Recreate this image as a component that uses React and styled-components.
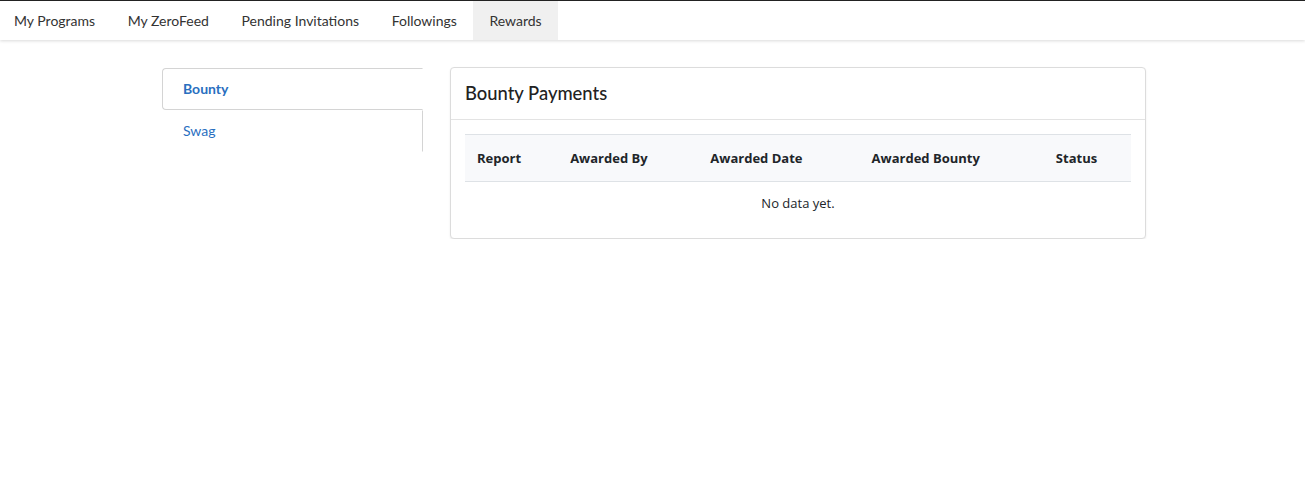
import React from "react";
import styled, { createGlobalStyle } from "styled-components";

const Global = createGlobalStyle`
  html, body { margin: 0; padding: 0; background: #fff; }
  body { font-family: Lato, "Open Sans", sans-serif; color: #212529; }
  * { box-sizing: border-box; }
`;

const TopNav = styled.nav`
  display: flex;
  height: 40px;
  border-top: 1px solid #222;
  background: #fff;
  box-shadow: 0 1px 3px rgba(0, 0, 0, 0.15);
`;

const NavItem = styled.div`
  display: flex;
  align-items: center;
  padding: 0 16.3px;
  font-size: 14px;
  color: #333;
  background: ${(p) => (p.$active ? "#f0f0f0" : "transparent")};
  &:first-child { padding-left: 14px; }
`;

const Main = styled.div`
  display: flex;
  align-items: flex-start;
  padding: 28px 0 0 162px;
  gap: 27px;
`;

const Side = styled.div`
  width: 261px;
  display: flex;
  flex-direction: column;
`;

const SideItem = styled.div`
  height: 42px;
  display: flex;
  align-items: center;
  padding: 0 0 2px 20px;
  font-size: 14px;
  font-weight: ${(p) => (p.$active ? 700 : 400)};
  color: #2a6fbf;
  border: 1px solid ${(p) => (p.$active ? "#d4d4d4" : "transparent")};
  border-right: ${(p) => (p.$active ? "1px solid transparent" : "1px solid #d4d4d4")};
  border-radius: ${(p) => (p.$active ? "4px 0 0 4px" : "0")};
`;

const Card = styled.div`
  margin-top: -1px;
  width: 696px;
  border: 1px solid #dcdcdc;
  border-radius: 4px;
  box-shadow: 0 1px 2px rgba(0, 0, 0, 0.08);
  background: #fff;
`;

const CardHeader = styled.div`
  height: 52px;
  display: flex;
  align-items: center;
  padding: 0 14px 2px;
  font-size: 18.4px;
  font-weight: 500;
  color: #222;
  border-bottom: 1px solid #e3e3e3;
`;

const CardBody = styled.div`
  padding: 14px 14px 13px;
`;

const Table = styled.table`
  width: 100%;
  border-collapse: collapse;
  font-family: "Open Sans", Lato, sans-serif;
  font-size: 13px;
`;

const Th = styled.th`
  text-align: left;
  font-weight: 700;
  height: 47px;
  padding: 0 12px;
  background: #f8f9fb;
  border-top: 1px solid #dee2e6;
  border-bottom: 1px solid #dee2e6;
  color: #212529;
`;

const Empty = styled.td`
  text-align: center;
  height: 43px;
  padding: 0 0 1px;
  color: #212529;
`;

const cols = [
  ["Report", 93],
  ["Awarded By", 140],
  ["Awarded Date", 161],
  ["Awarded Bounty", 184],
  ["Status", 87],
];

export default function App() {
  return (
    <>
      <Global />
      <TopNav>
        <NavItem>My Programs</NavItem>
        <NavItem>My ZeroFeed</NavItem>
        <NavItem>Pending Invitations</NavItem>
        <NavItem>Followings</NavItem>
        <NavItem $active>Rewards</NavItem>
      </TopNav>
      <Main>
        <Side>
          <SideItem $active>Bounty</SideItem>
          <SideItem>Swag</SideItem>
        </Side>
        <Card>
          <CardHeader>Bounty Payments</CardHeader>
          <CardBody>
            <Table>
              <thead>
                <tr>
                  {cols.map(([c, w]) => (
                    <Th key={c} style={{ width: w }}>{c}</Th>
                  ))}
                </tr>
              </thead>
              <tbody>
                <tr>
                  <Empty colSpan={5}>No data yet.</Empty>
                </tr>
              </tbody>
            </Table>
          </CardBody>
        </Card>
      </Main>
    </>
  );
}
